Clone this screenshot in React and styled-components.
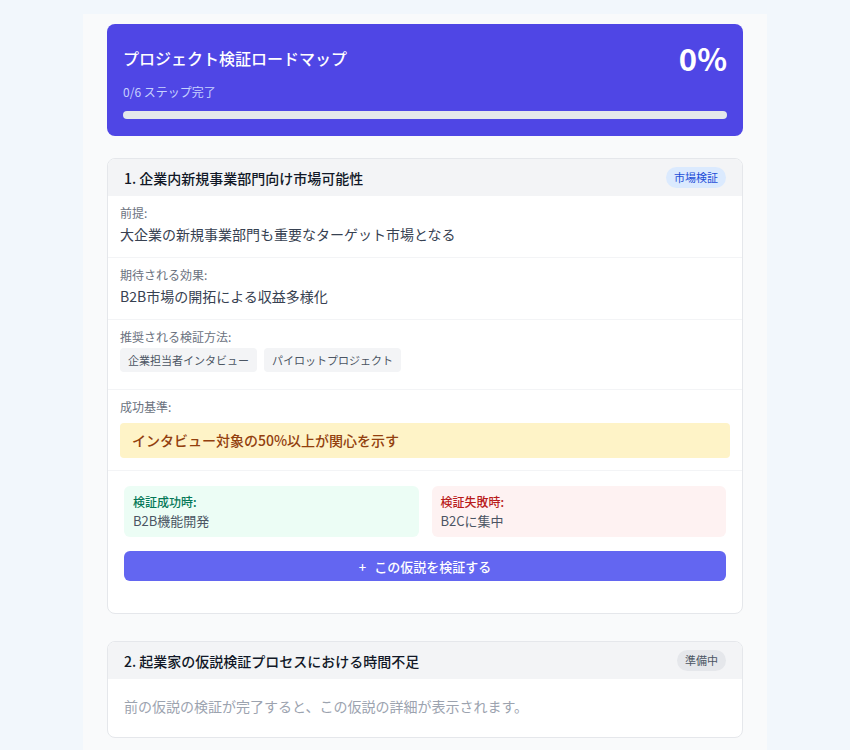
import React from 'react';
import styled, { createGlobalStyle } from 'styled-components';

const GlobalStyle = createGlobalStyle`
  html, body {
    margin: 0;
    padding: 0;
    background: #f2f7fc;
    font-family: "Noto Sans CJK JP", "Noto Sans", sans-serif;
    color: #374151;
  }
`;

const Page = styled.div`
  width: 684px;
  margin: 14px auto 0;
  padding: 10px 24px 24px;
  box-sizing: border-box;
  background: #f9fafb;
  min-height: 736px;
`;

const Hero = styled.div`
  background: #4f46e5;
  border-radius: 8px;
  padding: 13px 16px 17px;
  color: #fff;
  margin-bottom: 22px;
`;

const HeroRow = styled.div`
  display: flex;
  justify-content: space-between;
  align-items: center;
`;

const HeroTitle = styled.h1`
  margin: 0;
  font-size: 16px;
  font-weight: 500;
  line-height: 24px;
`;

const Percent = styled.div`
  font-size: 31px;
  font-weight: 600;
  line-height: 40px;
  margin-top: 1px;
`;

const HeroSub = styled.div`
  font-size: 12px;
  color: #c7d2fe;
  line-height: 18px;
  margin-top: 5px;
`;

const Track = styled.div`
  margin-top: 10px;
  height: 8px;
  border-radius: 999px;
  background: #e5e7eb;
  overflow: hidden;
`;

const Fill = styled.div`
  height: 100%;
  background: #a5b4fc;
`;

const CardList = styled.div`
  display: flex;
  flex-direction: column;
  gap: 27px;
`;

const Card = styled.div`
  background: #fff;
  border: 1px solid #e5e7eb;
  border-radius: 8px;
  overflow: hidden;
`;

const CardHead = styled.div`
  display: flex;
  align-items: center;
  justify-content: space-between;
  background: #f3f4f6;
  padding: 8px 16px;
  height: 37px;
  box-sizing: border-box;
`;

const CardTitle = styled.h2`
  margin: 0;
  font-size: 14px;
  font-weight: 500;
  color: #111827;
  line-height: 22px;
`;

const Badge = styled.span`
  font-size: 11px;
  line-height: 15px;
  padding: 3px 8px;
  border-radius: 999px;
  background: ${p => (p.$tone === 'blue' ? '#dbeafe' : '#e5e7eb')};
  color: ${p => (p.$tone === 'blue' ? '#1d4ed8' : '#4b5563')};
`;

const Section = styled.div`
  padding: 8px 12px 12px;
  border-bottom: 1px solid #f3f4f6;
`;

const Label = styled.div`
  font-size: 12px;
  line-height: 18px;
  color: #6b7280;
`;

const Value = styled.div`
  font-size: 14px;
  line-height: 22px;
  color: #374151;
  margin-top: 1px;
`;

const Chips = styled.div`
  display: flex;
  flex-wrap: wrap;
  gap: 7px;
  margin: 2px 0 5px;
`;

const Chip = styled.span`
  font-size: 11px;
  line-height: 24px;
  padding: 0 8px;
  border-radius: 4px;
  background: #f3f4f6;
  color: #4b5563;
`;

const Criteria = styled.div`
  margin-top: 7px;
  background: #fef3c7;
  color: #92400e;
  font-size: 14px;
  font-weight: 500;
  line-height: 23px;
  padding: 6px 12px;
  border-radius: 4px;
`;

const Outcomes = styled.div`
  padding: 15px 16px 32px;
`;

const OutcomeGrid = styled.div`
  display: grid;
  grid-template-columns: 1fr 1fr;
  gap: 13px;
`;

const Outcome = styled.div`
  border-radius: 6px;
  padding: 7px 9px 6px;
  background: ${p => (p.$ok ? '#ecfdf5' : '#fef2f2')};
`;

const OutcomeLabel = styled.div`
  font-size: 12px;
  font-weight: 500;
  line-height: 18px;
  color: ${p => (p.$ok ? '#047857' : '#b91c1c')};
`;

const OutcomeValue = styled.div`
  font-size: 13px;
  line-height: 20px;
  color: #4b5563;
`;

const VerifyButton = styled.button`
  margin-top: 14px;
  width: 100%;
  height: 30px;
  border: none;
  border-radius: 6px;
  background: #6366f1;
  color: #fff;
  font-family: inherit;
  font-size: 13px;
  font-weight: 500;
  display: flex;
  align-items: center;
  justify-content: center;
  gap: 8px;
  cursor: pointer;
`;

const Locked = styled.div`
  padding: 16px 16px 20px;
  font-size: 14px;
  line-height: 22px;
  color: #9ca3af;
`;

const steps = { done: 0, total: 6 };

export default function App() {
  const pct = Math.round((steps.done / steps.total) * 100);
  return (
    <>
      <GlobalStyle />
      <Page>
        <Hero>
          <HeroRow>
            <HeroTitle>プロジェクト検証ロードマップ</HeroTitle>
            <Percent>{pct}%</Percent>
          </HeroRow>
          <HeroSub>{steps.done}/{steps.total} ステップ完了</HeroSub>
          <Track>
            <Fill style={{ width: `${pct}%` }} />
          </Track>
        </Hero>

        <CardList>
          <Card>
            <CardHead>
              <CardTitle>1. 企業内新規事業部門向け市場可能性</CardTitle>
              <Badge $tone="blue">市場検証</Badge>
            </CardHead>
            <Section>
              <Label>前提:</Label>
              <Value>大企業の新規事業部門も重要なターゲット市場となる</Value>
            </Section>
            <Section>
              <Label>期待される効果:</Label>
              <Value>B2B市場の開拓による収益多様化</Value>
            </Section>
            <Section>
              <Label>推奨される検証方法:</Label>
              <Chips>
                <Chip>企業担当者インタビュー</Chip>
                <Chip>パイロットプロジェクト</Chip>
              </Chips>
            </Section>
            <Section>
              <Label>成功基準:</Label>
              <Criteria>インタビュー対象の50%以上が関心を示す</Criteria>
            </Section>
            <Outcomes>
              <OutcomeGrid>
                <Outcome $ok>
                  <OutcomeLabel $ok>検証成功時:</OutcomeLabel>
                  <OutcomeValue>B2B機能開発</OutcomeValue>
                </Outcome>
                <Outcome>
                  <OutcomeLabel>検証失敗時:</OutcomeLabel>
                  <OutcomeValue>B2Cに集中</OutcomeValue>
                </Outcome>
              </OutcomeGrid>
              <VerifyButton>
                <span>+</span>
                <span>この仮説を検証する</span>
              </VerifyButton>
            </Outcomes>
          </Card>

          <Card>
            <CardHead>
              <CardTitle>2. 起業家の仮説検証プロセスにおける時間不足</CardTitle>
              <Badge>準備中</Badge>
            </CardHead>
            <Locked>前の仮説の検証が完了すると、この仮説の詳細が表示されます。</Locked>
          </Card>
        </CardList>
      </Page>
    </>
  );
}
